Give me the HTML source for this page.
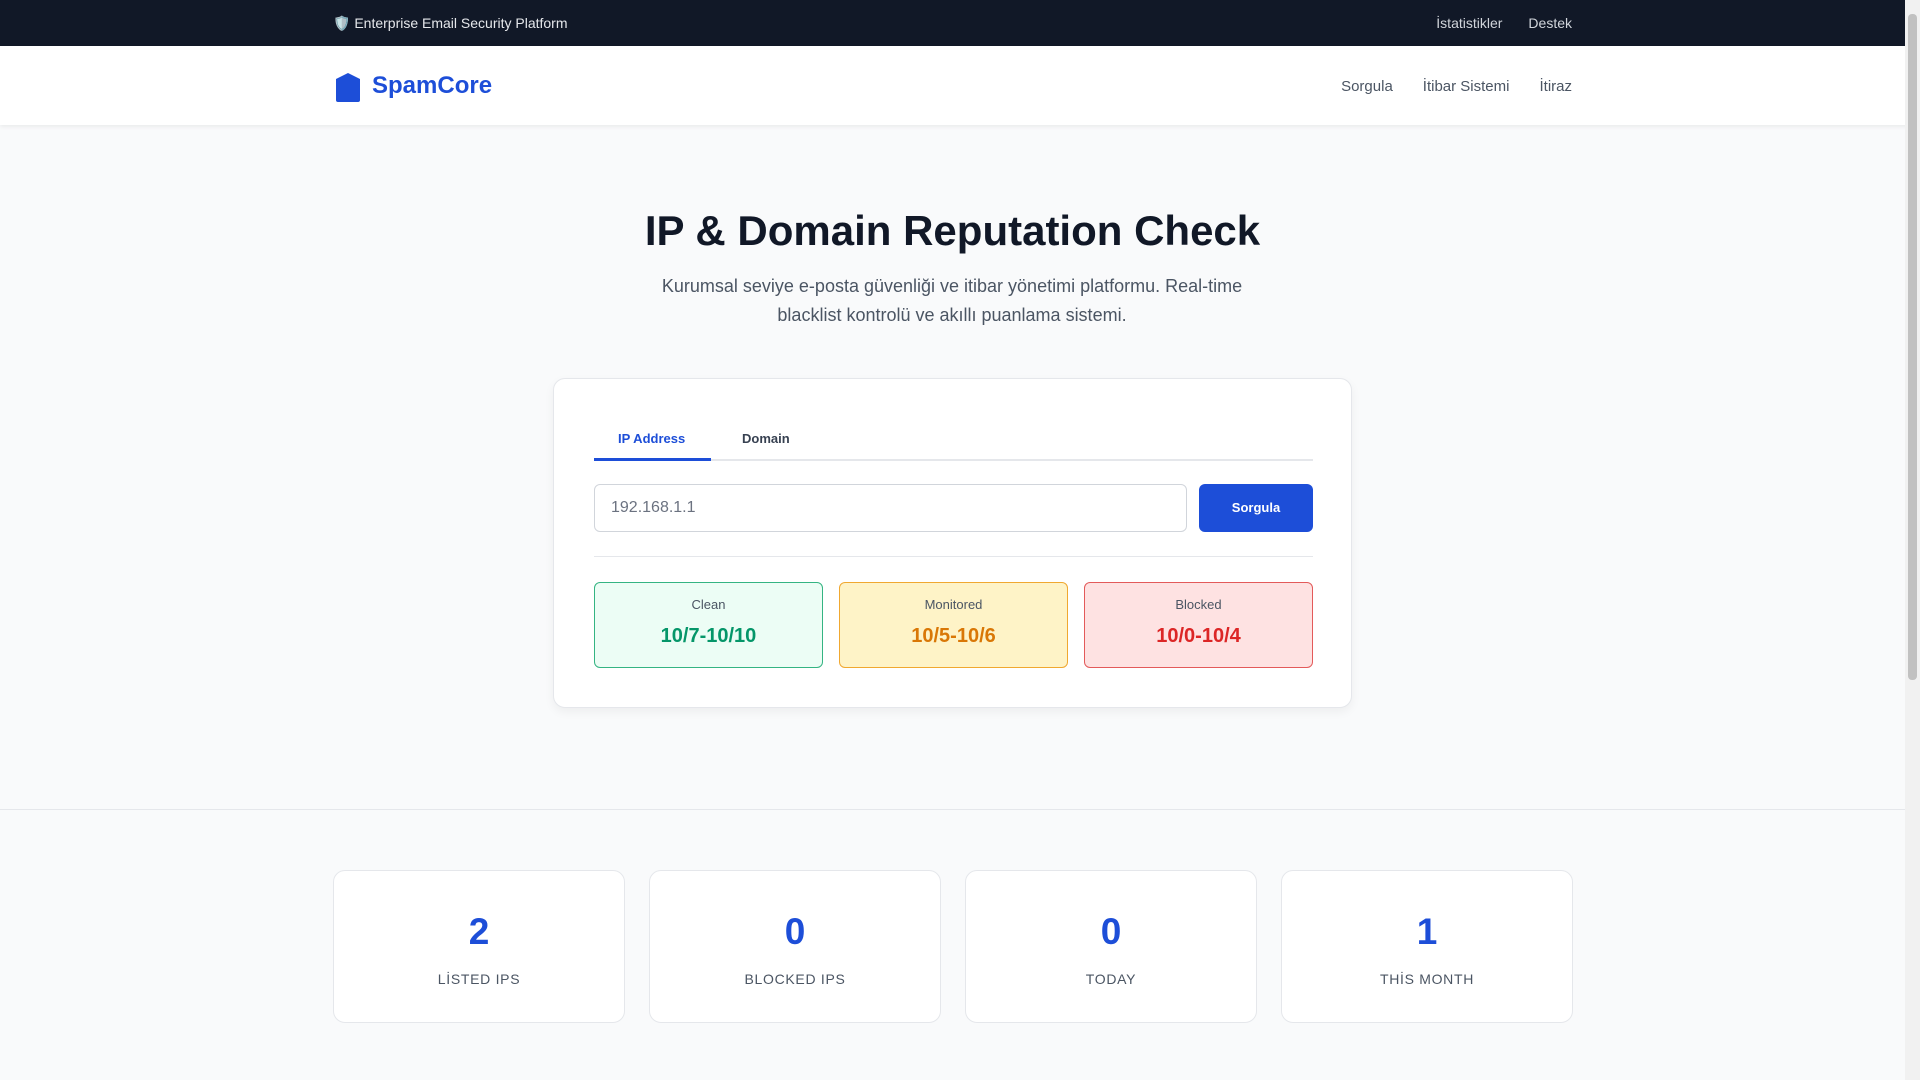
<!DOCTYPE html>
<html><head><meta charset="utf-8"><style>
*{box-sizing:border-box;margin:0;padding:0}
body{width:1920px;height:1080px;overflow:hidden;font-family:"Liberation Sans",sans-serif;background:#f9fafb;position:relative}
.sb{position:absolute;right:0;top:0;width:15px;height:1080px;background:#f1f1f1}
.sb div{position:absolute;left:3px;top:14px;width:9px;height:666px;background:#c1c1c1;border-radius:4px}
.top{height:46px;background:#111827;color:#e5e7eb;font-size:14px;position:relative}
.top .l{position:absolute;left:333px;top:15px}
.top .r{position:absolute;right:348px;top:15px;color:#d1d5db}
.top .r span{margin-left:26px}
.nav{height:79px;background:#fff;box-shadow:0 2px 4px rgba(0,0,0,.06);position:relative}
.logo{position:absolute;left:335px;top:72px}
.brand{position:absolute;left:372px;top:72px;color:#1d4ed8;font-weight:bold;font-size:24px}
.links{position:absolute;right:348px;top:78px;font-size:15px;color:#4b5563}
.links span{margin-left:30px}
h1{position:absolute;left:0;width:1905px;text-align:center;top:207px;font-size:42px;color:#111827}
.sub{position:absolute;left:652px;width:600px;text-align:center;top:272px;font-size:18px;line-height:29px;color:#4b5563}
.card{position:absolute;left:553px;top:378px;width:799px;height:330px;background:#fff;border:1px solid #e5e7eb;border-radius:12px;box-shadow:0 4px 10px rgba(0,0,0,.05)}
.tabs{position:absolute;left:40px;top:40px;width:719px;height:42px;border-bottom:2px solid #e5e7eb}
.tab{position:absolute;top:12px;font-size:13px;font-weight:bold;color:#374151}
.ul{position:absolute;left:0;bottom:-2px;width:117px;height:3px;background:#1d4ed8}
.inp{position:absolute;left:40px;top:105px;width:593px;height:48px;border:1px solid #d1d5db;border-radius:6px;font-size:16px;color:#6b7280;padding:14px 16px}
.btn{position:absolute;left:645px;top:105px;width:114px;height:48px;background:#1d4ed8;border-radius:6px;color:#fff;font-size:13px;font-weight:bold;text-align:center;line-height:48px}
.hr{position:absolute;left:40px;top:177px;width:719px;height:1px;background:#e5e7eb}
.st{position:absolute;top:203px;width:229px;height:86px;border:1px solid;border-radius:6px;text-align:center}
.st .a{font-size:13px;color:#4b5563;margin-top:14px}
.st .b{font-size:20px;font-weight:bold;margin-top:13px}
.line{position:absolute;left:0;top:809px;width:1905px;height:1px;background:#e5e7eb}
.sc{position:absolute;top:870px;width:292px;height:153px;background:#fff;border:1px solid #e5e7eb;border-radius:12px;text-align:center}
.sc .n{font-size:37px;font-weight:bold;color:#1d4ed8;margin-top:40px}
.sc .t{font-size:14px;color:#4b5563;letter-spacing:.7px;margin-top:18px}
</style></head><body>
<div class="top"><div class="l">🛡️ Enterprise Email Security Platform</div><div class="r"><span>İstatistikler</span><span>Destek</span></div></div>
<div class="nav"></div>
<svg class="logo" width="26" height="31" viewBox="0 0 26 31"><path d="M13 1 L25 7 V28 Q25 30 23 30 H3 Q1 30 1 28 V7 Z" fill="#1d4ed8"/></svg>
<div class="brand">SpamCore</div>
<div class="links"><span>Sorgula</span><span>İtibar Sistemi</span><span>İtiraz</span></div>
<h1>IP &amp; Domain Reputation Check</h1>
<div class="sub">Kurumsal seviye e-posta güvenliği ve itibar yönetimi platformu. Real-time blacklist kontrolü ve akıllı puanlama sistemi.</div>
<div class="card">
<div class="tabs"><div class="tab" style="left:24px;color:#1d4ed8">IP Address</div><div class="tab" style="left:148px">Domain</div><div class="ul"></div></div>
<div class="inp">192.168.1.1</div><div class="btn">Sorgula</div>
<div class="hr"></div>
<div class="st" style="left:40px;background:#ecfdf5;border-color:#34b482"><div class="a">Clean</div><div class="b" style="color:#059669">10/7-10/10</div></div>
<div class="st" style="left:285px;background:#fef3c7;border-color:#f0a830"><div class="a">Monitored</div><div class="b" style="color:#d97706">10/5-10/6</div></div>
<div class="st" style="left:530px;background:#fee2e2;border-color:#e35a5a"><div class="a">Blocked</div><div class="b" style="color:#dc2626">10/0-10/4</div></div>
</div>
<div class="line"></div>
<div class="sc" style="left:333px"><div class="n">2</div><div class="t">LİSTED IPS</div></div>
<div class="sc" style="left:649px"><div class="n">0</div><div class="t">BLOCKED IPS</div></div>
<div class="sc" style="left:965px"><div class="n">0</div><div class="t">TODAY</div></div>
<div class="sc" style="left:1281px"><div class="n">1</div><div class="t">THİS MONTH</div></div>
<div class="sb"><div></div></div>
</body></html>
